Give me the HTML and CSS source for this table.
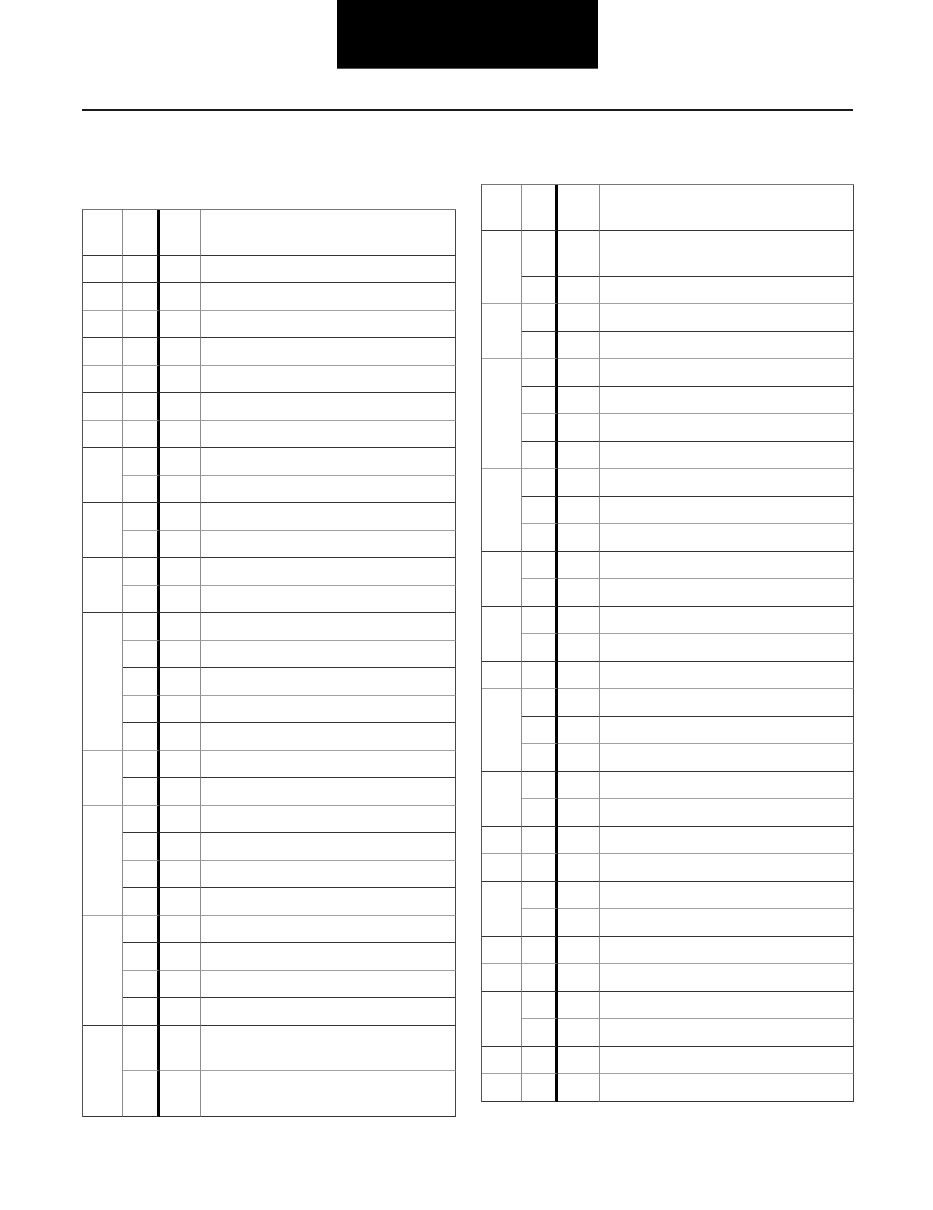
FILE: index.html
```html
<!DOCTYPE html>
<html lang="en">
<head>
<meta charset="utf-8">
<title>Form</title>
<link rel="stylesheet" href="styles.css">
</head>
<body>
<div class="banner"></div>
<div class="rule"></div>
<div class="tables">
  <div class="grid left">
    <div class="a"></div><div class="b"></div><div class="c"></div><div class="d"></div>
    <div class="a"></div><div class="b"></div><div class="c"></div><div class="d"></div>
    <div class="a g"></div><div class="b g"></div><div class="c g"></div><div class="d g"></div>
    <div class="a"></div><div class="b"></div><div class="c"></div><div class="d"></div>
    <div class="a g"></div><div class="b g"></div><div class="c g"></div><div class="d g"></div>
    <div class="a"></div><div class="b"></div><div class="c"></div><div class="d"></div>
    <div class="a g"></div><div class="b g"></div><div class="c g"></div><div class="d g"></div>
    <div class="a"></div><div class="b"></div><div class="c"></div><div class="d"></div>

    <div class="a s2"></div>
    <div class="b g"></div><div class="c g"></div><div class="d g"></div>
    <div class="b"></div><div class="c"></div><div class="d"></div>

    <div class="a s2"></div>
    <div class="b g"></div><div class="c g"></div><div class="d g"></div>
    <div class="b"></div><div class="c"></div><div class="d"></div>

    <div class="a s2"></div>
    <div class="b g"></div><div class="c g"></div><div class="d g"></div>
    <div class="b"></div><div class="c"></div><div class="d"></div>

    <div class="a s5 g"></div>
    <div class="b g"></div><div class="c g"></div><div class="d g"></div>
    <div class="b"></div><div class="c"></div><div class="d"></div>
    <div class="b g"></div><div class="c g"></div><div class="d g"></div>
    <div class="b"></div><div class="c"></div><div class="d"></div>
    <div class="b g"></div><div class="c g"></div><div class="d g"></div>

    <div class="a s2 g"></div>
    <div class="b"></div><div class="c"></div><div class="d"></div>
    <div class="b g"></div><div class="c g"></div><div class="d g"></div>

    <div class="a s4 g"></div>
    <div class="b"></div><div class="c"></div><div class="d"></div>
    <div class="b g"></div><div class="c g"></div><div class="d g"></div>
    <div class="b"></div><div class="c"></div><div class="d"></div>
    <div class="b g"></div><div class="c g"></div><div class="d g"></div>

    <div class="a s4"></div>
    <div class="b"></div><div class="c"></div><div class="d"></div>
    <div class="b g"></div><div class="c g"></div><div class="d g"></div>
    <div class="b"></div><div class="c"></div><div class="d"></div>
    <div class="b"></div><div class="c"></div><div class="d"></div>

    <div class="a s2"></div>
    <div class="b g"></div><div class="c g"></div><div class="d g"></div>
    <div class="b"></div><div class="c"></div><div class="d"></div>
  </div>

  <div class="grid right">
    <div class="a"></div><div class="b"></div><div class="c"></div><div class="d"></div>

    <div class="a s2 g"></div>
    <div class="b"></div><div class="c"></div><div class="d"></div>
    <div class="b g"></div><div class="c g"></div><div class="d g"></div>

    <div class="a s2 g"></div>
    <div class="b"></div><div class="c"></div><div class="d"></div>
    <div class="b g"></div><div class="c g"></div><div class="d g"></div>

    <div class="a s4 g"></div>
    <div class="b"></div><div class="c"></div><div class="d"></div>
    <div class="b g"></div><div class="c g"></div><div class="d g"></div>
    <div class="b"></div><div class="c"></div><div class="d"></div>
    <div class="b g"></div><div class="c g"></div><div class="d g"></div>

    <div class="a s3"></div>
    <div class="b"></div><div class="c"></div><div class="d"></div>
    <div class="b g"></div><div class="c g"></div><div class="d g"></div>
    <div class="b"></div><div class="c"></div><div class="d"></div>

    <div class="a s2"></div>
    <div class="b g"></div><div class="c g"></div><div class="d g"></div>
    <div class="b"></div><div class="c"></div><div class="d"></div>

    <div class="a s2"></div>
    <div class="b g"></div><div class="c g"></div><div class="d g"></div>
    <div class="b"></div><div class="c"></div><div class="d"></div>

    <div class="a g"></div><div class="b g"></div><div class="c g"></div><div class="d g"></div>

    <div class="a s3"></div>
    <div class="b"></div><div class="c"></div><div class="d"></div>
    <div class="b g"></div><div class="c g"></div><div class="d g"></div>
    <div class="b"></div><div class="c"></div><div class="d"></div>

    <div class="a s2"></div>
    <div class="b g"></div><div class="c g"></div><div class="d g"></div>
    <div class="b"></div><div class="c"></div><div class="d"></div>

    <div class="a g"></div><div class="b g"></div><div class="c g"></div><div class="d g"></div>
    <div class="a"></div><div class="b"></div><div class="c"></div><div class="d"></div>

    <div class="a s2"></div>
    <div class="b g"></div><div class="c g"></div><div class="d g"></div>
    <div class="b"></div><div class="c"></div><div class="d"></div>

    <div class="a g"></div><div class="b g"></div><div class="c g"></div><div class="d g"></div>
    <div class="a"></div><div class="b"></div><div class="c"></div><div class="d"></div>

    <div class="a s2"></div>
    <div class="b g"></div><div class="c g"></div><div class="d g"></div>
    <div class="b"></div><div class="c"></div><div class="d"></div>

    <div class="a g"></div><div class="b g"></div><div class="c g"></div><div class="d g"></div>
    <div class="a"></div><div class="b"></div><div class="c"></div><div class="d"></div>
  </div>
</div>
</body>
</html>
```

FILE: styles.css
```css
* { box-sizing: border-box; }
html, body { margin: 0; padding: 0; background: #fff; }
body { width: 933px; font-family: "Liberation Sans", Arial, sans-serif; }

.banner {
  margin-left: 337px;
  width: 261px;
  height: 69px;
  background: #000;
  border-bottom: 1px solid #555;
}

.rule {
  margin: 40px 0 0 82px;
  width: 771px;
  height: 2px;
  background: #1a1a1a;
}

.tables {
  display: flex;
  align-items: flex-start;
}

.grid {
  display: grid;
  border-top: 1px solid #777;
  border-left: 1px solid #555;
}

.left {
  margin: 98px 0 0 82px;
  grid-template-columns: 40px 37px 41px 255px;
  grid-template-rows: 46px repeat(14, 27px 28px) 45px 46px;
}

.right {
  margin: 73px 0 0 25px;
  grid-template-columns: 40px 36px 42px 254px;
  grid-template-rows: 46px 46px repeat(15, 27px 28px);
}

.grid > div {
  grid-column: auto;
  border-bottom: 1px solid #333;
  border-right: 1px solid #8c8c8c;
}
.grid > .a { grid-column: 1; }
.grid > .b { border-right: 3px solid #000; }
.grid > .d { border-right-color: #444; }
.grid > .g { border-bottom-color: #a0a0a0; }

.s2 { grid-row: span 2; }
.s3 { grid-row: span 3; }
.s4 { grid-row: span 4; }
.s5 { grid-row: span 5; }
```
